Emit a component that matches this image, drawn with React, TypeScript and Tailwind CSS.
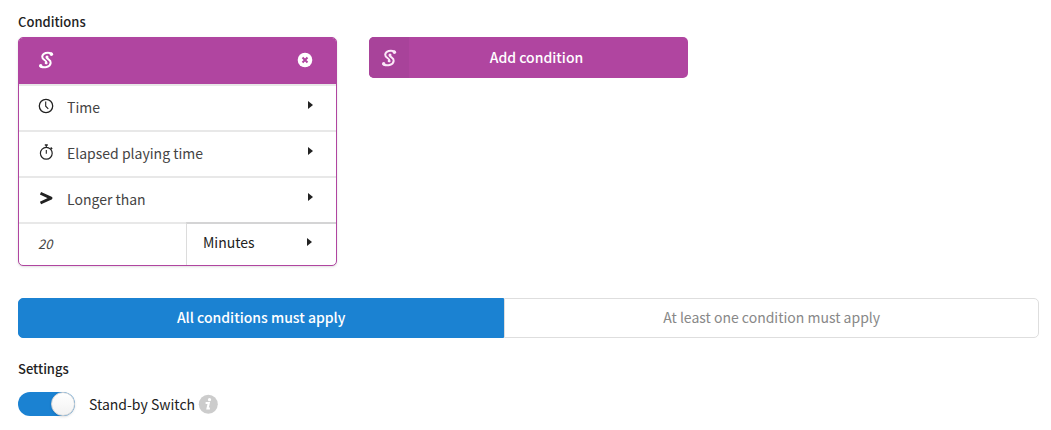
import { useState } from "react";

function ScriptMark({ className }: { className: string }) {
  return (
    <svg viewBox="0 0 16 18" className={className} fill="none" stroke="currentColor" strokeLinecap="round" aria-hidden="true">
      <path d="M13.500 2.400C10 1 4.600 1.600 4.200 5.600c-.2 3.700 4.700 3.200 4.300 6.600" strokeWidth="2" />
      <path d="M2.500 15.500c3.400 1.500 9.600 1 10.200-3.700.3-3.300-3.500-3.200-3.900-5.300" strokeWidth="2" />
      <circle cx="13.400" cy="3.200" r="1.700" fill="currentColor" stroke="none" />
      <circle cx="2.700" cy="14.700" r="1.700" fill="currentColor" stroke="none" />
      <circle cx="9" cy="6.100" r="1.500" fill="currentColor" stroke="none" />
      <circle cx="8" cy="12" r="1.300" fill="currentColor" stroke="none" />
    </svg>
  );
}

function ClockIcon() {
  return (
    <svg viewBox="0 0 16 16" className="size-4" fill="none" stroke="currentColor" aria-hidden="true">
      <circle cx="8" cy="8" r="6.700" strokeWidth="1.300" />
      <path d="M7.700 3.500v4.700l2.600 2.600" strokeWidth="1.100" />
    </svg>
  );
}

function StopwatchIcon() {
  return (
    <svg viewBox="0 0 16 16" className="size-4" fill="none" stroke="currentColor" aria-hidden="true">
      <circle cx="8.300" cy="9.300" r="5.900" strokeWidth="1.200" />
      <path d="M8.300 1v2.400M8.300 6v3.800" strokeWidth="1.100" />
      <path d="M6.800.9h3M12.600 3.600l1.500 1.500" strokeWidth="1.500" />
    </svg>
  );
}

function GreaterIcon() {
  return (
    <svg viewBox="0 0 16 16" className="size-4" fill="none" stroke="currentColor" aria-hidden="true">
      <path d="M2.500 3.200l10.500 4.900L2.500 13" strokeWidth="2.900" strokeLinejoin="round" />
    </svg>
  );
}

function Caret() {
  return (
    <svg viewBox="0 0 5 8" className="mb-1 h-2 w-[5px] shrink-0" fill="currentColor" aria-hidden="true">
      <path d="M0 0l5 4-5 4z" />
    </svg>
  );
}

const rows = [
  { name: "Category", value: "Time", icon: <ClockIcon /> },
  { name: "Measure", value: "Elapsed playing time", icon: <StopwatchIcon /> },
  { name: "Comparison", value: "Longer than", icon: <GreaterIcon /> },
];

function ConditionCard() {
  return (
    <section className="overflow-hidden rounded-[5px] border border-[#b045a0] bg-white shadow-sm">
      <header className="flex h-[46px] items-center justify-between bg-[#b045a0] pr-[23px] pb-0.5 pl-[19px] text-white">
        <ScriptMark className="h-[18px] w-4" />
        <button type="button" aria-label="Remove condition" className="cursor-pointer">
          <svg viewBox="0 0 16 16" className="size-4" aria-hidden="true">
            <circle cx="8" cy="8" r="7.300" fill="#fff" />
            <path d="M5.500 5.500l5 5M10.500 5.500l-5 5" stroke="#b045a0" strokeWidth="2" />
          </svg>
        </button>
      </header>
      {rows.map((row) => (
        <div key={row.name} className="flex h-[46px] items-center border-t-2 border-[#e8e8e8] pr-[23px] pb-0.5 pl-[19px]">
          <span className="mr-[13px] mb-0.5 shrink-0 text-[#222]">{row.icon}</span>
          <select aria-label={row.name} className="h-full min-w-0 flex-1 cursor-pointer appearance-none text-[#444]">
            <option>{row.value}</option>
          </select>
          <Caret />
        </div>
      ))}
      <div className="flex h-[43px]">
        <input
          aria-label="Value"
          defaultValue="20"
          className="min-w-0 flex-1 border-t-2 border-[#e8e8e8] pb-0.5 pl-[19px] text-[13px] text-[#444] italic outline-none"
        />
        <div className="flex w-[150px] items-center border-t-2 border-l border-t-[#d4d4d5] border-l-[#dcdcdc] pr-6 pb-0.5 pl-4">
          <select aria-label="Unit" className="h-full min-w-0 flex-1 cursor-pointer appearance-none pb-1">
            <option>Minutes</option>
          </select>
          <Caret />
        </div>
      </div>
    </section>
  );
}

export default function App() {
  const [all, setAll] = useState(true);
  const on = "bg-[#1b82d2] text-white font-medium border-[#1b82d2]";
  const off = "bg-white text-[#888] border-[#dedede]";
  return (
    <main className="bg-white pt-3 pr-3 pb-3 pl-[18px] font-['Noto_Sans_CJK_SC',sans-serif] text-sm leading-5 text-[#222]">
      <h2 className="mb-[5px] text-[13px] font-medium">Conditions</h2>
      <div className="grid grid-cols-3 items-start gap-8">
        <ConditionCard />
        <button type="button" className="flex h-[41px] cursor-pointer items-center overflow-hidden rounded-[5px] bg-[#b045a0] text-white">
          <span className="flex h-full w-10 shrink-0 items-center justify-center bg-[#a8439a] text-[#fbe9f8]">
            <ScriptMark className="h-[18px] w-4" />
          </span>
          <span className="flex-1 pr-6 pb-0.5 font-medium">Add condition</span>
        </button>
      </div>
      <div className="mt-8 flex h-10">
        <button type="button" aria-pressed={all} onClick={() => setAll(true)} className={`flex-auto cursor-pointer rounded-l-[5px] border pb-0.5 ${all ? on : off}`}>
          All conditions must apply
        </button>
        <button type="button" aria-pressed={!all} onClick={() => setAll(false)} className={`flex-auto cursor-pointer rounded-r-[5px] border pb-0.5 ${all ? off : on}`}>
          At least one condition must apply
        </button>
      </div>
      <h2 className="mt-[21px] text-[13px] font-medium">Settings</h2>
      <div className="mt-[13px] flex items-center">
        <input
          id="standby"
          type="checkbox"
          role="switch"
          defaultChecked
          className="flex h-6 w-[57px] cursor-pointer appearance-none rounded-full bg-[#ddd] before:size-6 before:rounded-full before:border before:border-[#d4d4d5] before:bg-linear-to-b before:from-white before:to-[#f2f2f2] before:shadow-sm checked:justify-end checked:bg-[#1b82d2]"
        />
        <label htmlFor="standby" className="ml-[14px] cursor-pointer">Stand-by Switch</label>
        <svg viewBox="0 0 20 20" className="ml-[3px] size-5" role="img" aria-label="Information">
          <circle cx="10.300" cy="10.300" r="9.500" fill="#ccc" />
          <circle cx="11.500" cy="5.700" r="1.600" fill="#fff" />
          <path d="M7.600 9h3.200l-1.300 5.500h2.400" fill="none" stroke="#fff" strokeWidth="2.100" />
        </svg>
      </div>
    </main>
  );
}
